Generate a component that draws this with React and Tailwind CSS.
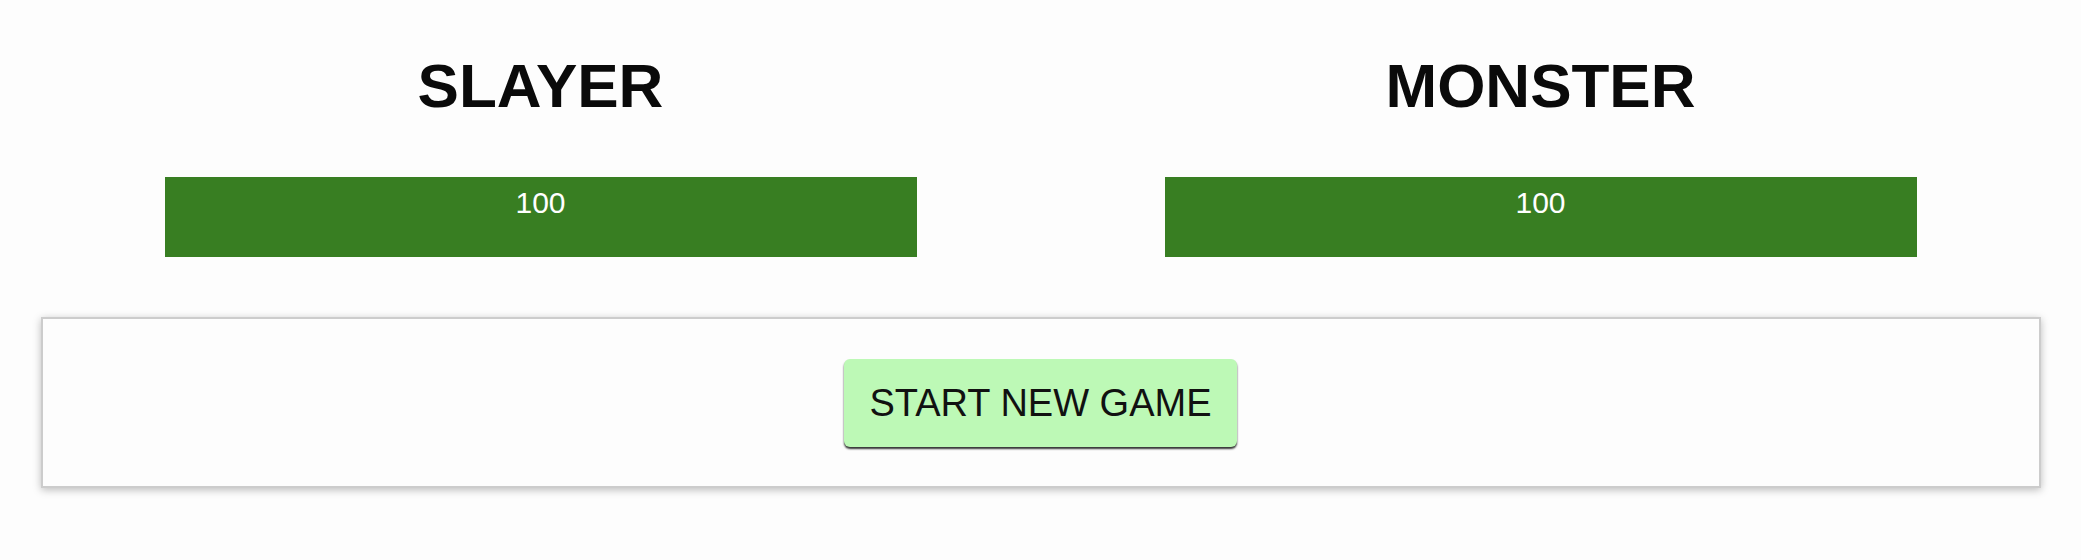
import React from 'react';

const HealthBar = ({ name, health }) => {
  return (
    <section className="flex flex-col items-center">
      <h2 className="mt-[55px] text-[62px] leading-none font-bold text-[#0a0a0a]">{name}</h2>
      <div className="mt-[60px] w-[752px] h-[80px] bg-[#e8e8e8]">
        <div
          className="h-full bg-[#387e22] text-white text-center text-[30px] leading-[45px] pt-[3px]"
          style={{ width: `${health}%` }}
        >
          {health}
        </div>
      </div>
    </section>
  );
};

export default function App() {
  return (
    <div className="min-h-screen bg-[#fdfdfd] font-['Liberation_Sans',Arial,sans-serif]">
      <div className="mx-auto max-w-[2000px]">
        {/* health */}
        <header className="grid grid-cols-2">
          <HealthBar name="SLAYER" health={100} />
          <HealthBar name="MONSTER" health={100} />
        </header>

        {/* controls */}
        <section className="mt-[60px] flex justify-center border-2 border-[#cccccc] bg-[#fdfdfd] pt-[40px] pb-[39px] shadow-[0_2px_8px_rgba(0,0,0,0.26)]">
          <button className="h-[88px] px-[25px] rounded-[6px] bg-[#bdf9b6] text-[38px] leading-none text-[#111] shadow-[0_2px_2px_rgba(0,0,0,0.8)]">
            START NEW GAME
          </button>
        </section>
      </div>
    </div>
  );
}
